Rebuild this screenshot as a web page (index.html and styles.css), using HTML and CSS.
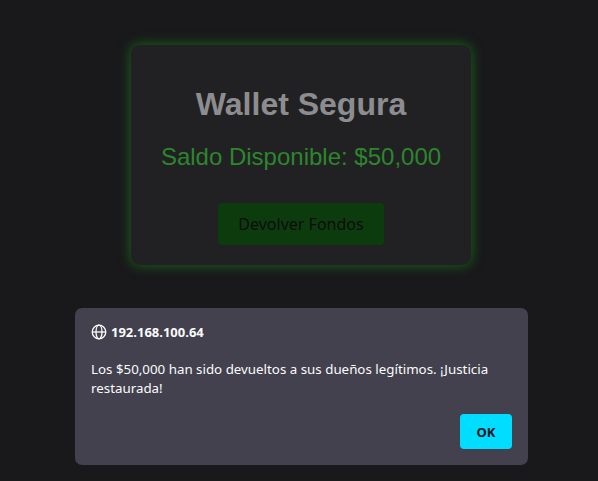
FILE: index.html
```html
<!DOCTYPE html>
<html lang="es">
<head>
<meta charset="utf-8">
<title>Wallet Segura</title>
<link rel="stylesheet" href="styles.css">
</head>
<body>
<main class="page">
  <section class="card">
    <h1 class="title">Wallet Segura</h1>
    <h2 class="balance">Saldo Disponible: $50,000</h2>
    <button class="return-btn">Devolver Fondos</button>
  </section>
</main>
<div class="dialog" role="alertdialog">
  <div class="dialog-head">
    <svg class="globe" width="16" height="16" viewBox="0 0 16 16" fill="none" stroke="#fbfbfe" stroke-width="1.3">
      <circle cx="8" cy="8" r="6.8"/>
      <ellipse cx="8" cy="8" rx="3" ry="6.8"/>
      <line x1="1.2" y1="8" x2="14.8" y2="8"/>
    </svg>
    <span class="host">192.168.100.64</span>
  </div>
  <p class="dialog-msg">Los $50,000 han sido devueltos a sus dueños legítimos. ¡Justicia restaurada!</p>
  <div class="dialog-actions">
    <button class="ok-btn">OK</button>
  </div>
</div>
</body>
</html>
```
FILE: styles.css
```css
html, body {
  margin: 0;
  padding: 0;
  background: #19191b;
  height: 100%;
}
body {
  font-family: "Liberation Sans", Arial, sans-serif;
}
.page {
  display: flex;
  justify-content: center;
  padding-top: 45px;
  padding-left: 4px;
}
.card {
  width: 340px;
  box-sizing: border-box;
  background: #212123;
  border-radius: 9px;
  padding: 20px 20px 20px;
  text-align: center;
  box-shadow: 0 0 12px 1px rgba(25, 140, 25, 0.6);
}
.title {
  margin: 21px 0 21px;
  font-size: 32px;
  line-height: 36px;
  font-weight: bold;
  color: #8d8d8f;
}
.balance {
  margin: 0 0 32px;
  font-size: 24px;
  line-height: 28px;
  font-weight: normal;
  color: #2c862c;
}
.return-btn {
  display: inline-block;
  width: 166px;
  height: 42px;
  border: none;
  border-radius: 4px;
  background: #0c3c0e;
  color: #0c0c0c;
  font-family: "Noto Sans", "Open Sans", sans-serif;
  font-size: 16px;
  padding: 0;
  vertical-align: top;
}
.dialog {
  position: absolute;
  left: 75px;
  top: 308px;
  width: 453px;
  height: 157px;
  box-sizing: border-box;
  background: #42414d;
  border-radius: 7px;
  padding: 16px;
  color: #fbfbfe;
  font-family: "Noto Sans", sans-serif;
  font-size: 13.33px;
  display: flex;
  flex-direction: column;
}
.dialog-head {
  display: flex;
  align-items: center;
  gap: 4px;
  height: 16px;
}
.host {
  font-weight: bold;
  font-size: 13px;
}
.dialog-msg {
  margin: 20px 0 0;
  line-height: 19px;
}
.dialog-actions {
  margin-top: auto;
  display: flex;
  justify-content: flex-end;
}
.ok-btn {
  width: 52px;
  height: 35px;
  border: none;
  border-radius: 4px;
  background: #00ddff;
  color: #15141a;
  font-family: "Noto Sans", sans-serif;
  font-weight: bold;
  font-size: 13px;
  padding: 0;
}
```
